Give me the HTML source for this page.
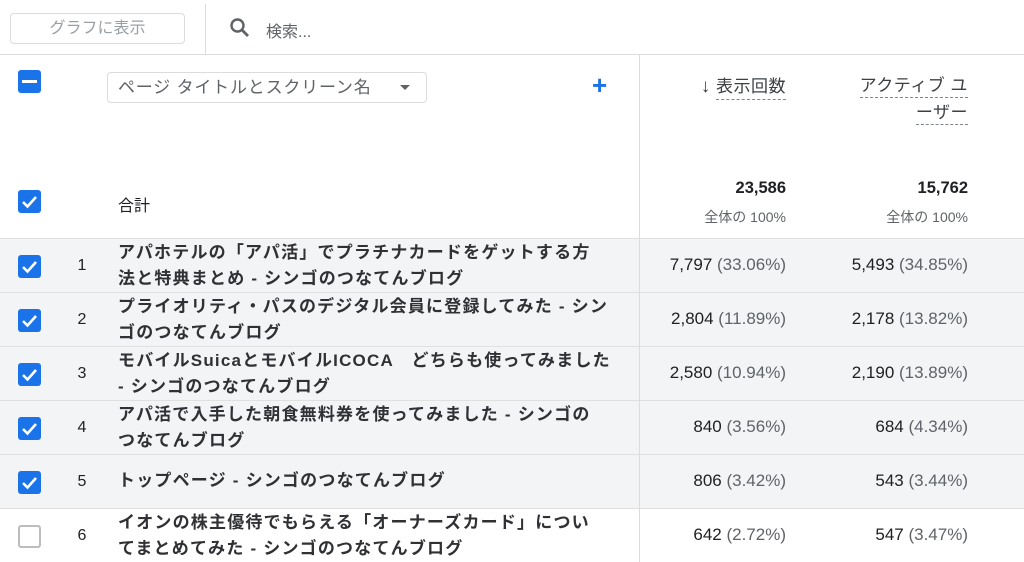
<!DOCTYPE html>
<html><head><meta charset="utf-8"><style>
*{margin:0;padding:0;box-sizing:border-box}
body{width:1024px;height:562px;overflow:hidden;background:#fff;font-family:"Liberation Sans","Noto Sans CJK JP",sans-serif;color:#202124;position:relative}
.abs{position:absolute}
.cb{position:absolute;left:18px;width:23px;height:23px;border-radius:3px;background:#1a73e8}
.cb.off{background:#fff;border:2px solid #bdbdbd}
.row{position:absolute;left:0;width:1024px;height:54px;border-top:1px solid #e0e0e0}
.row.sel{background:#f3f4f6}
.num{position:absolute;left:76px;width:12px;text-align:center;font-size:16px;top:18px}
.ttl{position:absolute;left:118px;width:520px;font-size:17px;letter-spacing:1.2px;line-height:26px;top:1px;font-weight:bold;color:#303134;white-space:nowrap}
.ttl.one{top:13px}
.v{position:absolute;font-size:17px;top:16px;text-align:right}
.v span{color:#5f6368}
.v1{right:238px}.v2{right:56px}
</style></head><body>
<div class="abs" style="left:0;top:54px;width:1024px;border-top:1px solid #dcdcdc"></div>
<div class="abs" style="left:205px;top:4px;height:50px;border-left:1px solid #dcdcdc"></div>
<div class="abs" style="left:10px;top:13px;width:175px;height:31px;border:1px solid #dadce0;border-radius:4px;color:#9aa0a6;font-size:16px;text-align:center;line-height:29px">グラフに表示</div>
<svg class="abs" style="left:228px;top:16px" width="24" height="24" viewBox="0 0 24 24"><circle cx="9.5" cy="9.5" r="6" fill="none" stroke="#5f6368" stroke-width="2.4"/><path d="M14 14l6 6" stroke="#5f6368" stroke-width="2.8"/></svg>
<div class="abs" style="left:266px;top:18px;font-size:16px;color:#5f6368">検索...</div>
<div class="abs" style="left:639px;top:55px;height:507px;border-left:1px solid #dcdcdc"></div>
<div class="cb" style="top:70px"><div class="abs" style="left:4px;top:10px;width:15px;height:3px;background:#fff"></div></div>
<div class="abs" style="left:107px;top:72px;width:320px;height:31px;border:1px solid #dadce0;border-radius:4px;font-size:17px;color:#5f6368;line-height:29px;padding-left:10px;letter-spacing:0.8px">ページ タイトルとスクリーン名<span style="position:absolute;right:16px;top:12px;border-left:5px solid transparent;border-right:5px solid transparent;border-top:5px solid #5f6368"></span></div>
<div class="abs" style="left:592px;top:70px;font-size:26px;color:#1a73e8;line-height:30px;font-weight:bold">+</div>
<div class="abs" style="right:238px;top:72px;font-size:17px;color:#3c4043;letter-spacing:0.5px"><span style="font-weight:bold;font-size:19px">↓</span> <span style="border-bottom:1px dashed #80868b;padding-bottom:3px">表示回数</span></div>
<div class="abs" style="right:56px;top:72px;font-size:17px;color:#3c4043;text-align:right;line-height:27px;letter-spacing:0.5px"><span style="border-bottom:1px dashed #80868b;padding-bottom:2px">アクティブ ユ</span><br><span style="border-bottom:1px dashed #80868b;padding-bottom:2px">ーザー</span></div>
<div class="cb" style="top:190px"><svg width="23" height="23" viewBox="0 0 23 23"><path d="M5 12l4.5 4.5L18 7" fill="none" stroke="#fff" stroke-width="2.6"/></svg></div>
<div class="abs" style="left:118px;top:192px;font-size:16px">合計</div>
<div class="abs" style="right:238px;top:179px;font-size:16.5px;font-weight:bold;text-align:right">23,586</div>
<div class="abs" style="right:238px;top:207px;font-size:14px;color:#5f6368">全体の 100%</div>
<div class="abs" style="right:56px;top:179px;font-size:16.5px;font-weight:bold">15,762</div>
<div class="abs" style="right:56px;top:207px;font-size:14px;color:#5f6368">全体の 100%</div>

<div class="row sel" style="top:238px"><div class="cb" style="top:16px"><svg width="23" height="23" viewBox="0 0 23 23"><path d="M5 12l4.5 4.5L18 7" fill="none" stroke="#fff" stroke-width="2.6"/></svg></div><div class="num">1</div><div class="ttl">アパホテルの「アパ活」でプラチナカードをゲットする方<br>法と特典まとめ - シンゴのつなてんブログ</div><div class="v v1">7,797 <span>(33.06%)</span></div><div class="v v2">5,493 <span>(34.85%)</span></div></div>
<div class="row sel" style="top:292px"><div class="cb" style="top:16px"><svg width="23" height="23" viewBox="0 0 23 23"><path d="M5 12l4.5 4.5L18 7" fill="none" stroke="#fff" stroke-width="2.6"/></svg></div><div class="num">2</div><div class="ttl">プライオリティ・パスのデジタル会員に登録してみた - シン<br>ゴのつなてんブログ</div><div class="v v1">2,804 <span>(11.89%)</span></div><div class="v v2">2,178 <span>(13.82%)</span></div></div>
<div class="row sel" style="top:346px"><div class="cb" style="top:16px"><svg width="23" height="23" viewBox="0 0 23 23"><path d="M5 12l4.5 4.5L18 7" fill="none" stroke="#fff" stroke-width="2.6"/></svg></div><div class="num">3</div><div class="ttl">モバイルSuicaとモバイルICOCA　どちらも使ってみました<br>- シンゴのつなてんブログ</div><div class="v v1">2,580 <span>(10.94%)</span></div><div class="v v2">2,190 <span>(13.89%)</span></div></div>
<div class="row sel" style="top:400px"><div class="cb" style="top:16px"><svg width="23" height="23" viewBox="0 0 23 23"><path d="M5 12l4.5 4.5L18 7" fill="none" stroke="#fff" stroke-width="2.6"/></svg></div><div class="num">4</div><div class="ttl">アパ活で入手した朝食無料券を使ってみました - シンゴの<br>つなてんブログ</div><div class="v v1">840 <span>(3.56%)</span></div><div class="v v2">684 <span>(4.34%)</span></div></div>
<div class="row sel" style="top:454px"><div class="cb" style="top:16px"><svg width="23" height="23" viewBox="0 0 23 23"><path d="M5 12l4.5 4.5L18 7" fill="none" stroke="#fff" stroke-width="2.6"/></svg></div><div class="num">5</div><div class="ttl one">トップページ - シンゴのつなてんブログ</div><div class="v v1">806 <span>(3.42%)</span></div><div class="v v2">543 <span>(3.44%)</span></div></div>
<div class="row" style="top:508px"><div class="cb off" style="top:16px"></div><div class="num">6</div><div class="ttl">イオンの株主優待でもらえる「オーナーズカード」につい<br>てまとめてみた - シンゴのつなてんブログ</div><div class="v v1">642 <span>(2.72%)</span></div><div class="v v2">547 <span>(3.47%)</span></div></div>
<div class="abs" style="left:639px;top:238px;height:324px;border-left:1px solid #dcdcdc"></div>
</body></html>
